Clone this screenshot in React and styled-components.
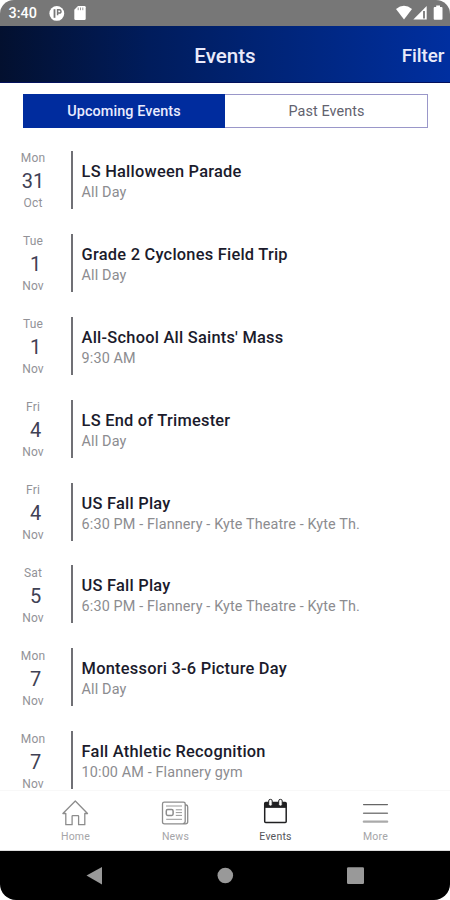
import React from "react";
import styled, { createGlobalStyle } from "styled-components";

const Global = createGlobalStyle`
  * { box-sizing: border-box; }
  body { margin: 0; background: #fff; }
`;
const Screen = styled.div`
  width: 450px;
  height: 900px;
  display: flex;
  flex-direction: column;
  overflow: hidden;
  border-radius: 14px 14px 16px 16px;
  background: #fff;
  font-family: Roboto, "Liberation Sans", sans-serif;
`;
const StatusBar = styled.div`
  flex: none;
  height: 26px;
  padding: 0 7px 0 8.5px;
  display: flex;
  align-items: center;
  background: #777;
  color: #fff;
`;
const Clock = styled.span`
  width: 39px;
  padding-top: 1px;
  font-size: 14.4px;
  font-weight: 500;
  line-height: 25px;
`;
const StatusIcons = styled.svg`
  display: block;
  margin-left: ${(p) => (p.$end ? "auto" : "0")};
`;
const Header = styled.header`
  flex: none;
  height: 57px;
  padding: 3px 5.5px 0;
  display: grid;
  grid-template-columns: 1fr auto 1fr;
  align-items: center;
  background: linear-gradient(90deg, #03102f 0%, #001c5c 33%, #002477 60%, #002fa0 100%);
  border-bottom: 1px solid #03105c;
  color: #e9eafa;
`;
const HeaderTitle = styled.h1`
  grid-column: 2;
  margin: 0;
  font-size: 20.6px;
  font-weight: 500;
  line-height: 24px;
`;
const FilterButton = styled.button`
  justify-self: end;
  border: 0;
  padding: 0;
  background: none;
  color: inherit;
  font: 500 18.8px/24px Roboto, sans-serif;
`;
const Tabs = styled.div`
  flex: none;
  display: grid;
  grid-template-columns: 201px 1fr;
  grid-template-rows: 32px;
  height: 34px;
  margin: 11px 22px 0 23px;
  border: 1px solid #9a97c9;
`;
const Tab = styled.button`
  border: 0;
  padding: ${(p) => (p.$active ? "2px 0 0" : "2px 0 0 1px")};
  margin: ${(p) => (p.$active ? "-1px 0 -1px -1px" : "0")};
  background: ${(p) => (p.$active ? "#002c9e" : "#fff")};
  color: ${(p) => (p.$active ? "#e9ebff" : "#62626e")};
  font: ${(p) => (p.$active ? 500 : 400)} 14.4px/20px Roboto, sans-serif;
  letter-spacing: 0.1px;
`;
const List = styled.main`
  flex: 1;
  min-height: 0;
  overflow: hidden;
  padding-top: 22.4px;
`;
const Row = styled.article`
  display: flex;
  height: 82.9px;
`;
const DateColumn = styled.div`
  width: 66px;
  height: 59px;
  display: flex;
  flex-direction: column;
  align-items: center;
  color: #929297;
  font-size: 12px;
  letter-spacing: 0.2px;
  line-height: 16px;
`;
const DayNumber = styled.span`
  margin-left: ${(p) => (p.$single ? "5px" : "0")};
  padding-top: 2px;
  font-size: 20px;
  line-height: 27px;
  color: #404154;
  letter-spacing: 0;
`;
const Details = styled.div`
  height: 58px;
  margin: 0.6px 0 0 5px;
  padding: 11px 0 0 8.6px;
  border-left: 2px solid #707075;
`;
const EventTitle = styled.h2`
  margin: 0;
  font-size: 16.4px;
  font-weight: 500;
  line-height: 20px;
  color: #1b1b2c;
  letter-spacing: 0.24px;
`;
const EventMeta = styled.p`
  margin: 0;
  font-size: 14.4px;
  line-height: 21px;
  color: #8c8c90;
  letter-spacing: 0.13px;
`;
const TabBar = styled.nav`
  flex: none;
  height: 61px;
  padding: 7px 25px 0;
  display: grid;
  grid-template-columns: repeat(4, 100px);
  border-top: 1px solid #f8f8f8;
  border-bottom: 1px solid #ddd;
`;
const NavItem = styled.a`
  display: flex;
  flex-direction: column;
  align-items: center;
  gap: 2px;
  color: ${(p) => (p.$active ? "#55555a" : "#a5a5a8")};
  font-size: 10.5px;
  line-height: 14px;
  letter-spacing: 0.2px;
`;
const NavLabel = styled.span`
  padding-left: 1px;
`;
const SystemBar = styled.div`
  flex: none;
  height: 49px;
  background: #000;
`;

const icons = {
  Home: <g stroke="#8c8c8c" strokeWidth="1.3"><path d="M2.9 15.5 15.3 3l12.2 12.5h-2.7v11.2h-6.2v-8.4q0-.6-.6-.6h-5.3q-.6 0-.6.6v8.4H5.8V15.5Z" /></g>,
  News: <g stroke="#8c8c8c" strokeWidth="1.3"><path d="M25.2 7h1.1q1.4.3 1.4 1.9v15.2q0 1.8-2.2 1.8H4.5q-2 0-2-2V6q0-1.8 1.8-1.8h19q1.9 0 1.9 1.8v17.3q0 2.4-2.3 2.4" /><rect x="6.3" y="11.6" width="6.8" height="5.8" rx="1.4" strokeWidth="1.5" /><path d="M6 8h16M15.8 11.8H22M15.8 14.6H22M15.8 17.4H22M6.2 21.3H22" strokeWidth=".9" /></g>,
  Events: <g stroke="#202022" strokeWidth="1.5"><path d="M4.7 9.1h21.5v14.3q0 1-1 1H5.7q-1 0-1-1Z" /><path d="M4.7 5.6q0-1 1-1h19.5q1 0 1 1v3.2H4.7Z" fill="#202022" /><rect x="8.7" y="1.4" width="3.5" height="6.6" rx="1.5" fill="#fff" strokeWidth="1" /><rect x="18.7" y="1.4" width="3.5" height="6.6" rx="1.5" fill="#fff" strokeWidth="1" /></g>,
  More: <g strokeLinecap="round"><path d="M3.6 6.6h23.8" stroke="#666" strokeWidth="1.4" /><path d="M3.6 15.2h23.8" stroke="#808080" strokeWidth="1.5" /><path d="M3.8 23.7h23.4" stroke="#aaa" strokeWidth="2.2" /></g>,
};

const events = [
  ["Mon", "31", "Oct", "LS Halloween Parade", "All Day"],
  ["Tue", "1", "Nov", "Grade 2 Cyclones Field Trip", "All Day"],
  ["Tue", "1", "Nov", "All-School All Saints' Mass", "9:30 AM"],
  ["Fri", "4", "Nov", "LS End of Trimester", "All Day"],
  ["Fri", "4", "Nov", "US Fall Play", "6:30 PM - Flannery - Kyte Theatre - Kyte Th."],
  ["Sat", "5", "Nov", "US Fall Play", "6:30 PM - Flannery - Kyte Theatre - Kyte Th."],
  ["Mon", "7", "Nov", "Montessori 3-6 Picture Day", "All Day"],
  ["Mon", "7", "Nov", "Fall Athletic Recognition", "10:00 AM - Flannery gym"],
];

export default function App() {
  return (
    <>
      <Global />
      <Screen>
        <StatusBar>
          <Clock>3:40</Clock>
          <StatusIcons width="40" height="26" viewBox="0 0 40 26">
            <circle cx="8.8" cy="13.4" r="7.4" fill="#fff" />
            <path d="M6.5 9.2v8.6" fill="none" stroke="#777" strokeWidth="1.8" />
            <path d="M9.6 15.2V9.8h1.7q1.7 0 1.7 1.6T11.3 13H10" fill="none" stroke="#777" strokeWidth="1.5" />
            <path d="M30 6h6.5q1.2 0 1.2 1.2v11.5q0 1.2-1.2 1.2h-9q-1.2 0-1.2-1.2V9.8Z" fill="#fff" />
            <path d="M30.2 7.5v2.7M32.5 7.5v2.7M34.8 7.5v2.7" stroke="#999" strokeWidth="1" />
          </StatusIcons>
          <StatusIcons $end width="48" height="26" viewBox="0 0 48 26">
            <path d="M1 9q8-6.3 16 0l-8 10.5Z" fill="#fff" />
            <path d="M18.3 19.5 31.7 6v13.5Z" fill="#fff" />
            <path d="M29 11v7.5" stroke="#777" strokeWidth="1.8" />
            <path d="M41.2 5.5h3.8v1.6h1.5q1 0 1 1v10.7q0 1-1 1h-6.8q-1 0-1-1V8.1q0-1 1-1h1.5Z" fill="#fff" />
          </StatusIcons>
        </StatusBar>
        <Header>
          <HeaderTitle>Events</HeaderTitle>
          <FilterButton>Filter</FilterButton>
        </Header>
        <Tabs>
          <Tab $active>Upcoming Events</Tab>
          <Tab>Past Events</Tab>
        </Tabs>
        <List>
          {events.map(([weekday, day, month, title, meta], i) => (
            <Row key={i}>
              <DateColumn>
                <span>{weekday}</span>
                <DayNumber $single={day.length === 1}>{day}</DayNumber>
                <span>{month}</span>
              </DateColumn>
              <Details>
                <EventTitle>{title}</EventTitle>
                <EventMeta>{meta}</EventMeta>
              </Details>
            </Row>
          ))}
        </List>
        <TabBar>
          {Object.entries(icons).map(([name, icon]) => (
            <NavItem key={name} $active={name === "Events"}>
              <svg width="30" height="30" viewBox="0 0 30 30" fill="none" strokeLinejoin="round">{icon}</svg>
              <NavLabel>{name}</NavLabel>
            </NavItem>
          ))}
        </TabBar>
        <SystemBar>
          <svg width="450" height="49" viewBox="0 0 450 49" fill="#999">
            <path d="M86.5 24.5 102 16v17.5Z" />
            <circle cx="225.3" cy="24.5" r="7.8" />
            <rect x="347" y="16.3" width="17" height="16.7" rx="1.3" />
          </svg>
        </SystemBar>
      </Screen>
    </>
  );
}
